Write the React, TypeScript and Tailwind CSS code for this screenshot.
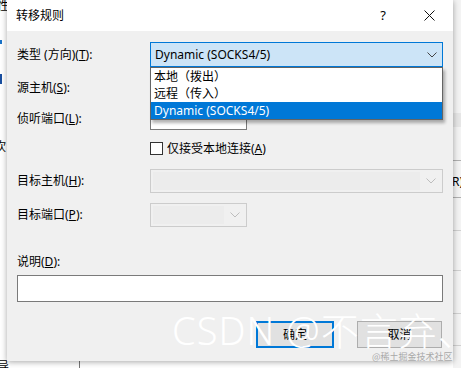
import React from "react";

const font = { fontFamily: '"Noto Sans", "Noto Sans CJK SC", sans-serif' };

function Chevron({ color = "#606060" }: { color?: string }) {
  return (
    <svg width="10" height="6" viewBox="0 0 10 6">
      <path d="M0.5 0.5 L5 5 L9.5 0.5" fill="none" stroke={color} strokeWidth="1" />
    </svg>
  );
}

function Label({ children }: { children: React.ReactNode }) {
  return <div className="w-[133px] shrink-0 text-[12px] leading-4 text-black">{children}</div>;
}

export default function App() {
  return (
    <div className="relative w-[461px] h-[368px] overflow-hidden bg-white" style={font}>
      {/* background window fragments */}
      <div className="absolute left-[-3px] top-[-3px] text-[12px] text-black">性</div>
      <div className="absolute left-[0px] top-[40px] w-[2px] h-[4px] bg-[#1a73c8]" />
      <div className="absolute left-[0px] top-[74px] w-[2px] h-[10px] bg-[#1a4fa0]" />
      <div className="absolute left-[-6px] top-[138px] text-[12px] text-black">吹</div>
      <div className="absolute left-[-3px] top-[358px] text-[12px] text-black">导</div>
      <div className="absolute left-[79px] top-[361px] w-[1px] h-[7px] bg-[#777]" />
      <div className="absolute left-[453px] top-0 w-[8px] h-[368px] bg-[#f3f3f3]">
        <div className="absolute left-0 top-[113px] w-[8px] h-[14px] bg-[#e6e6e6]" />
        <div className="absolute left-0 top-[160px] w-[8px] h-[1px] bg-[#b0b0b0]" />
        <div className="absolute left-0 top-[197px] w-[8px] h-[1px] bg-[#b0b0b0]" />
        <div className="absolute left-0 top-[230px] w-[8px] h-[1px] bg-[#d0d0d0]" />
        <div className="absolute left-0 top-[270px] w-[8px] h-[1px] bg-[#d0d0d0]" />
        <div className="absolute left-0 top-[313px] w-[8px] h-[1px] bg-[#d0d0d0]" />
        <div className="absolute left-0 top-[345px] w-[8px] h-[1px] bg-[#d0d0d0]" />
        <div className="absolute left-[-1px] top-[173px] text-[12px] text-black">R)</div>
      </div>

      {/* dialog */}
      <div className="absolute left-[7px] top-0 w-[446px] h-[361px] bg-[#f0f0f0] shadow-[0_1px_6px_rgba(0,0,0,0.35)] flex flex-col">
        {/* title bar */}
        <div className="h-[31px] shrink-0 bg-white flex items-center pl-[9px]">
          <div className="text-[12px] text-black flex-1">转移规则</div>
          <div className="w-[46px] text-center text-[13px] text-black ml-[3px]">?</div>
          <div className="w-[46px] flex justify-center mr-[1px]">
            <svg width="11" height="11" viewBox="0 0 11 11">
              <path d="M0.5 0.5 L10.5 10.5 M10.5 0.5 L0.5 10.5" stroke="#111" strokeWidth="1" />
            </svg>
          </div>
        </div>

        <div className="flex flex-col px-[10px]">
          {/* type */}
          <div className="mt-[11px] h-[25px] flex items-center">
            <Label>
              类型 (方向)(<span className="underline">T</span>):
            </Label>
            <div className="flex-1 h-[25px] border border-[#0078d7] bg-[#cce4f7] flex items-center pl-[4px] pr-[5px]">
              <div className="flex-1 text-[12px] text-black">Dynamic (SOCKS4/5)</div>
              <Chevron color="#444" />
            </div>
          </div>
          {/* source host */}
          <div className="mt-[9px] h-[24px] flex items-center">
            <Label>
              源主机(<span className="underline">S</span>):
            </Label>
            <div className="flex-1 h-[24px] border border-[#7a7a7a] bg-white" />
          </div>
          {/* listen port */}
          <div className="mt-[7px] h-[23px] flex items-center">
            <Label>
              侦听端口(<span className="underline">L</span>):
            </Label>
            <div className="w-[97px] h-[23px] border border-[#7a7a7a] bg-white" />
          </div>
          {/* checkbox */}
          <div className="mt-[12px] h-[13px] flex items-center">
            <div className="w-[133px] shrink-0" />
            <div className="w-[13px] h-[13px] border border-[#333] bg-white" />
            <div className="ml-[4px] text-[12px] leading-4 text-black">
              仅接受本地连接(<span className="underline">A</span>)
            </div>
          </div>
          {/* dest host */}
          <div className="mt-[14px] h-[24px] flex items-center">
            <Label>
              目标主机(<span className="underline">H</span>):
            </Label>
            <div className="flex-1 h-[24px] border border-[#cccccc] bg-[#f0f0f0] flex items-center p-[2px] pr-[6px]">
              <div className="flex-1 h-full bg-[#ececec]" />
              <div className="ml-[6px]">
                <Chevron color="#bdbdbd" />
              </div>
            </div>
          </div>
          {/* dest port */}
          <div className="mt-[10px] h-[24px] flex items-center">
            <Label>
              目标端口(<span className="underline">P</span>):
            </Label>
            <div className="w-[97px] h-[24px] border border-[#cccccc] bg-[#f0f0f0] flex items-center p-[2px] pr-[6px]">
              <div className="flex-1 h-full bg-[#ececec]" />
              <div className="ml-[6px]">
                <Chevron color="#bdbdbd" />
              </div>
            </div>
          </div>
          {/* description */}
          <div className="mt-[27px] h-[16px] text-[12px] leading-4 text-black">
            说明(<span className="underline">D</span>):
          </div>
          <div className="mt-[5px] h-[27px] border border-[#7a7a7a] bg-white" />
          {/* buttons */}
          <div className="mt-[19px] h-[27px] flex justify-end">
            <div className="w-[78px] h-[27px] border-2 border-[#0078d7] bg-[#e1e1e1] flex items-center justify-center text-[12px] text-black">
              确定
            </div>
            <div className="ml-[23px] mr-[1px] w-[85px] h-[27px] border border-[#adadad] bg-[#e1e1e1] flex items-center justify-center text-[12px] text-black">
              取消
            </div>
          </div>
        </div>

        {/* dropdown list overlay */}
        <div className="absolute left-[143px] top-[67px] w-[293px] border border-[#646464] bg-white shadow-[2px_3px_3px_rgba(0,0,0,0.3)] flex flex-col">
          <div className="h-[17px] flex items-center pl-[3px] text-[12px] text-black">本地（拨出）</div>
          <div className="h-[17px] flex items-center pl-[3px] text-[12px] text-black">远程（传入）</div>
          <div className="h-[17px] flex items-center pl-[3px] text-[12px] text-white bg-[#0078d7]">Dynamic (SOCKS4/5)</div>
        </div>
      </div>

      {/* watermarks */}
      <div className="absolute left-[172px] top-[306px] text-[38px] leading-[48px] text-white whitespace-nowrap font-light tracking-[1px]">
        CSDN @不言弃、
      </div>
      <div className="absolute left-[372px] top-[351px] text-[9px] leading-3 text-[#a8a8a8] whitespace-nowrap" style={{ fontFamily: '"Noto Sans CJK SC", serif' }}>
        @稀土掘金技术社区
      </div>
    </div>
  );
}
